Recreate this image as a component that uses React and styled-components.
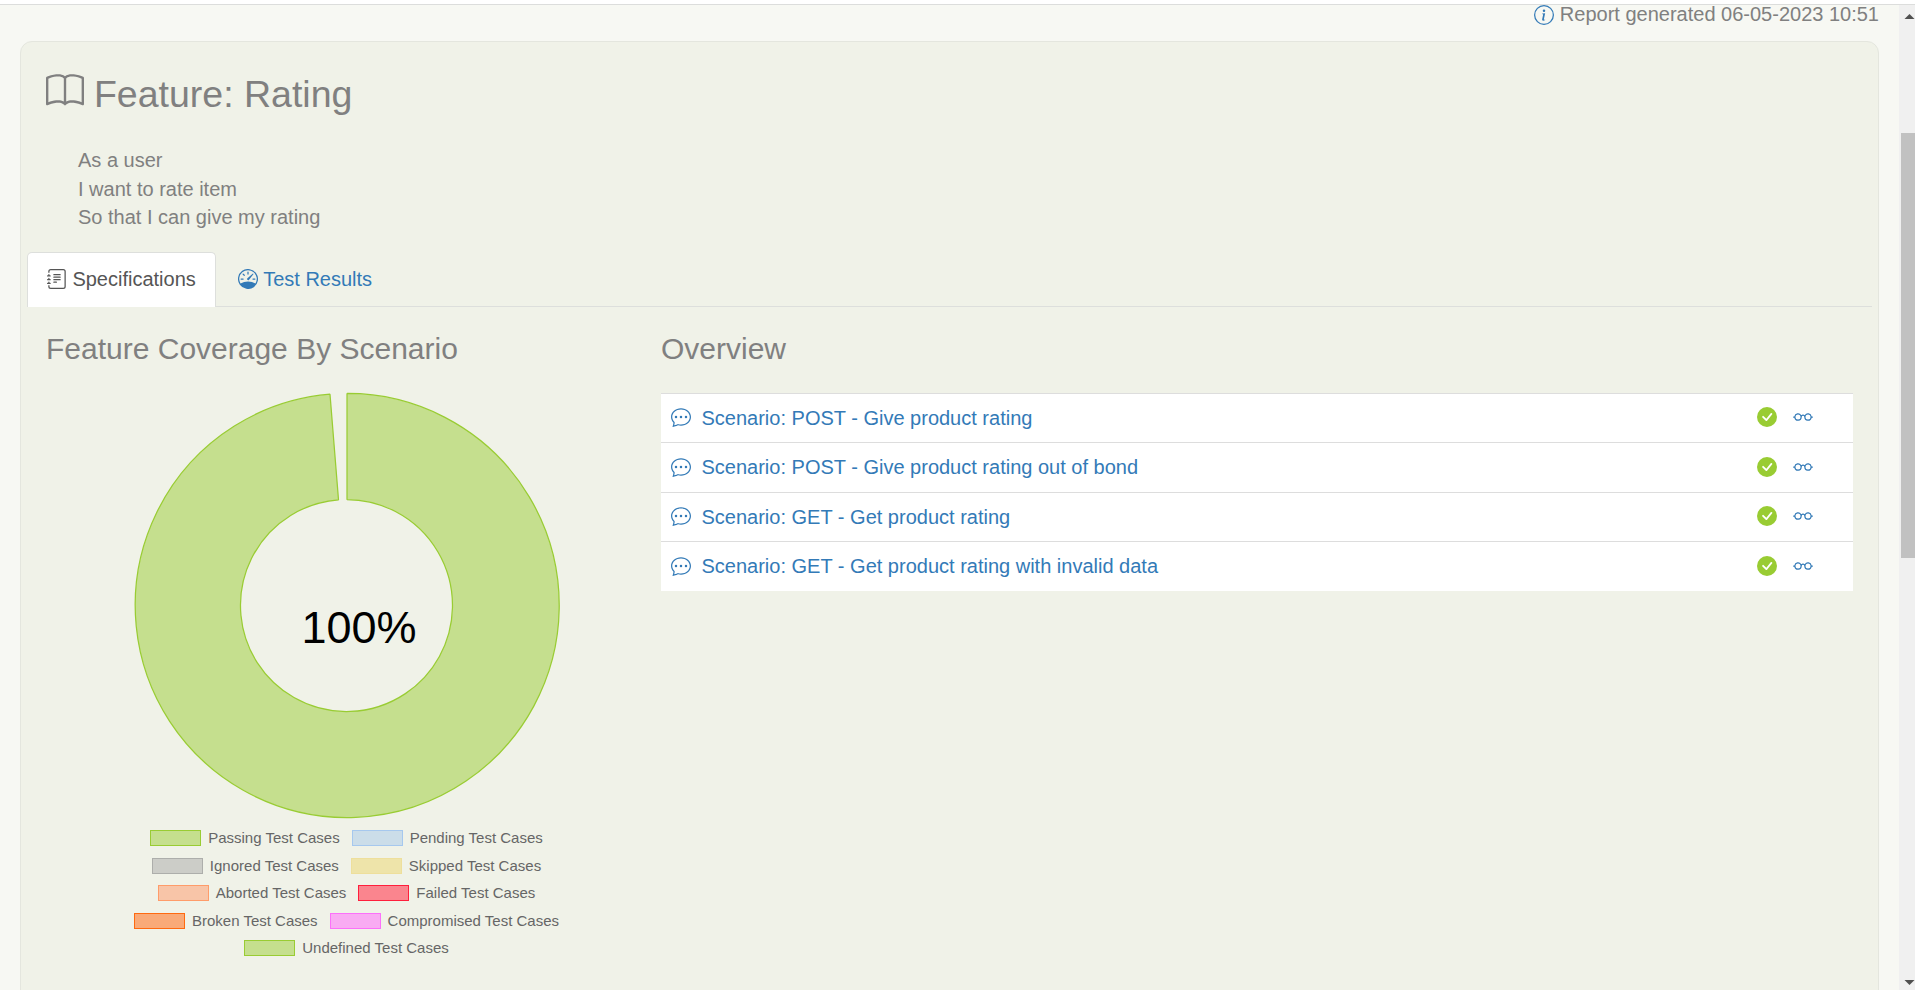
import React from "react";
import styled, { createGlobalStyle } from "styled-components";
import {
  BsBook,
  BsJournalText,
  BsSpeedometer,
  BsChatDots,
  BsCheckCircleFill,
  BsEyeglasses,
  BsInfoCircle,
} from "react-icons/bs";

const GlobalStyle = createGlobalStyle`
  * { box-sizing: border-box; }
  html, body { margin: 0; padding: 0; overflow: hidden; background: #fff; }
  body {
    font-family: "Liberation Sans", Arial, sans-serif;
    font-size: 20px;
    line-height: 28.57px;
    color: #808080;
  }
  svg { flex: none; }
`;

const Window = styled.div`
  display: flex;
  flex-direction: column;
  height: 990px;
  width: 1915px;
  overflow: hidden;
`;

const WindowEdge = styled.div`
  flex: none;
  height: 5px;
  background: #fff;
  border-bottom: 1px solid #dcdddc;
`;

const Viewport = styled.div`
  flex: 1;
  min-height: 0;
  display: flex;
`;

const Page = styled.main`
  flex: 1;
  min-width: 0;
  background: #f7f8f3;
  padding: 0 20px;
`;

const ReportMeta = styled.div`
  display: flex;
  justify-content: flex-end;
  align-items: center;
  gap: 5.5px;
  height: 18px;
  line-height: 18px;

  svg { color: #337ab7; margin-top: 1px; }
`;

const Panel = styled.section`
  margin-top: 18px;
  height: 1100px;
  border: 1px solid #e4e6de;
  border-radius: 12px;
  background: #f0f2e8;
  padding: 32px 6px 0;
`;

const FeatureTitle = styled.h2`
  display: flex;
  gap: 9.9px;
  height: 41.25px;
  margin: 0;
  padding-left: 19px;
  font-size: 37.5px;
  font-weight: 400;
  line-height: 41.25px;

  svg {
    width: 38px;
    height: 38px;
    margin-top: -2px;
  }
`;

const Narrative = styled.p`
  margin: 30.8px 0 0;
  padding-left: 51px;
`;

const Tabs = styled.nav`
  display: flex;
  margin-top: 20.2px;
  height: 55px;
  border-bottom: 1px solid #dddfdc;
`;

const Tab = styled.a`
  display: flex;
  align-items: center;
  gap: 5.4px;
  height: 55px;
  padding: 0 19px 2px;
  color: ${(p) => (p.$active ? "#555" : "#337ab7")};
  background: ${(p) => (p.$active ? "#fff" : "transparent")};
  border: 1px solid ${(p) => (p.$active ? "#dddfdc" : "transparent")};
  border-bottom: 0;
  border-radius: 5px 5px 0 0;
  margin-right: 2px;
`;

const Columns = styled.div`
  display: flex;
  padding: 25px 19px 0;
`;

const CoverageColumn = styled.div`
  width: 615px;
  flex: none;
`;

const OverviewColumn = styled.div`
  flex: 1;
`;

const SectionTitle = styled.h3`
  margin: 0;
  font-size: 30px;
  font-weight: 400;
  line-height: 33px;
`;

const Chart = styled.svg`
  display: block;
  margin: 26.3px 0 0 87px;
`;

const Legend = styled.div`
  display: flex;
  flex-direction: column;
  width: 601px;
  margin-top: 8px;
`;

const LegendRow = styled.div`
  display: flex;
  justify-content: center;
  gap: 12px;
  height: 27.5px;
`;

const LegendItem = styled.div`
  display: flex;
  align-items: center;
  gap: 7px;
  height: 20px;
  font-size: 15px;
  line-height: 20px;
  color: #666;
  white-space: nowrap;
`;

const Swatch = styled.span`
  width: 51px;
  height: 16px;
  background: ${(p) => p.$fill};
  border: 1px solid ${(p) => p.$line};
`;

const ScenarioTable = styled.div`
  margin-top: 27.9px;
  background: #fff;
`;

const ScenarioRow = styled.div`
  display: flex;
  align-items: center;
  height: 49.5px;
  border-top: 1px solid #ddd;
  padding: 0 40px 2px 10px;
  color: #337ab7;
`;

const ScenarioName = styled.a`
  flex: 1;
  margin-left: 10.5px;
  padding-top: 1.6px;
`;

const Outcome = styled.span`
  display: flex;
  align-items: center;
  gap: 16px;
`;

const PassIcon = styled(BsCheckCircleFill)`
  color: #9c3;
`;

const Scrollbar = styled.aside`
  flex: none;
  width: 16px;
  background: #f0f0f0;
  display: flex;
  flex-direction: column;
  align-items: flex-end;
  overflow: hidden;
`;

const ScrollEnd = styled.div`
  flex: none;
  height: ${(p) => p.$height}px;
  width: 11px;
  padding-top: ${(p) => p.$top}px;

  svg { display: block; fill: #505050; }
`;

const Thumb = styled.div`
  flex: none;
  width: 14px;
  height: 425px;
  background: #c1c1c1;
  margin-bottom: 411px;
`;

const scenarios = [
  "Scenario: POST - Give product rating",
  "Scenario: POST - Give product rating out of bond",
  "Scenario: GET - Get product rating",
  "Scenario: GET - Get product rating with invalid data",
];

const legend = [
  [
    { label: "Passing Test Cases", fill: "#c5df8e", line: "#99cc33" },
    { label: "Pending Test Cases", fill: "#cbdde9", line: "#a6c8ee" },
  ],
  [
    { label: "Ignored Test Cases", fill: "#cccdc8", line: "#adaeab" },
    { label: "Skipped Test Cases", fill: "#eee4aa", line: "#eedf9c" },
  ],
  [
    { label: "Aborted Test Cases", fill: "#f8c5a8", line: "#ff9c6a" },
    { label: "Failed Test Cases", fill: "#fa858e", line: "#ff1f3c" },
  ],
  [
    { label: "Broken Test Cases", fill: "#f9aa78", line: "#ff6a10" },
    { label: "Compromised Test Cases", fill: "#f9abf3", line: "#fc70fa" },
  ],
  [{ label: "Undefined Test Cases", fill: "#c5df8e", line: "#99cc33" }],
];

function CoverageChart() {
  return (
    <Chart width="428" height="429" viewBox="0 0 428 429">
      <path
        d="M214 2.5 A212 212 0 1 1 197 3.2 L205.5 108.8 A106 106 0 1 0 214 108.5 Z"
        fill="#c5df8e"
        stroke="#99cc33"
        strokeWidth="1.25"
        strokeLinejoin="bevel"
      />
      <text x="168.5" y="251.8" fontSize="45" fill="#000">
        100%
      </text>
    </Chart>
  );
}

export default function App() {
  return (
    <Window>
      <GlobalStyle />
      <WindowEdge />
      <Viewport>
        <Page>
          <ReportMeta>
            <BsInfoCircle />
            <span>Report generated 06-05-2023 10:51</span>
          </ReportMeta>
          <Panel>
            <FeatureTitle>
              <BsBook />
              <span>Feature: Rating</span>
            </FeatureTitle>
            <Narrative>
              As a user
              <br />
              I want to rate item
              <br />
              So that I can give my rating
            </Narrative>
            <Tabs>
              <Tab $active>
                <BsJournalText />
                <span>Specifications</span>
              </Tab>
              <Tab>
                <BsSpeedometer />
                <span>Test Results</span>
              </Tab>
            </Tabs>
            <Columns>
              <CoverageColumn>
                <SectionTitle>Feature Coverage By Scenario</SectionTitle>
                <CoverageChart />
                <Legend>
                  {legend.map((row) => (
                    <LegendRow key={row[0].label}>
                      {row.map((item) => (
                        <LegendItem key={item.label}>
                          <Swatch $fill={item.fill} $line={item.line} />
                          {item.label}
                        </LegendItem>
                      ))}
                    </LegendRow>
                  ))}
                </Legend>
              </CoverageColumn>
              <OverviewColumn>
                <SectionTitle>Overview</SectionTitle>
                <ScenarioTable>
                  {scenarios.map((name) => (
                    <ScenarioRow key={name}>
                      <BsChatDots />
                      <ScenarioName>{name}</ScenarioName>
                      <Outcome>
                        <PassIcon />
                        <BsEyeglasses />
                      </Outcome>
                    </ScenarioRow>
                  ))}
                </ScenarioTable>
              </OverviewColumn>
            </Columns>
          </Panel>
        </Page>
        <Scrollbar>
          <ScrollEnd $height={128} $top={9}>
            <svg width="11" height="5" viewBox="0 0 11 5">
              <path d="M0.5 5 L5.5 0 L10.5 5 Z" />
            </svg>
          </ScrollEnd>
          <Thumb />
          <ScrollEnd $height={21} $top={11}>
            <svg width="11" height="5" viewBox="0 0 11 5">
              <path d="M0.5 0 L5.5 5 L10.5 0 Z" />
            </svg>
          </ScrollEnd>
        </Scrollbar>
      </Viewport>
    </Window>
  );
}
